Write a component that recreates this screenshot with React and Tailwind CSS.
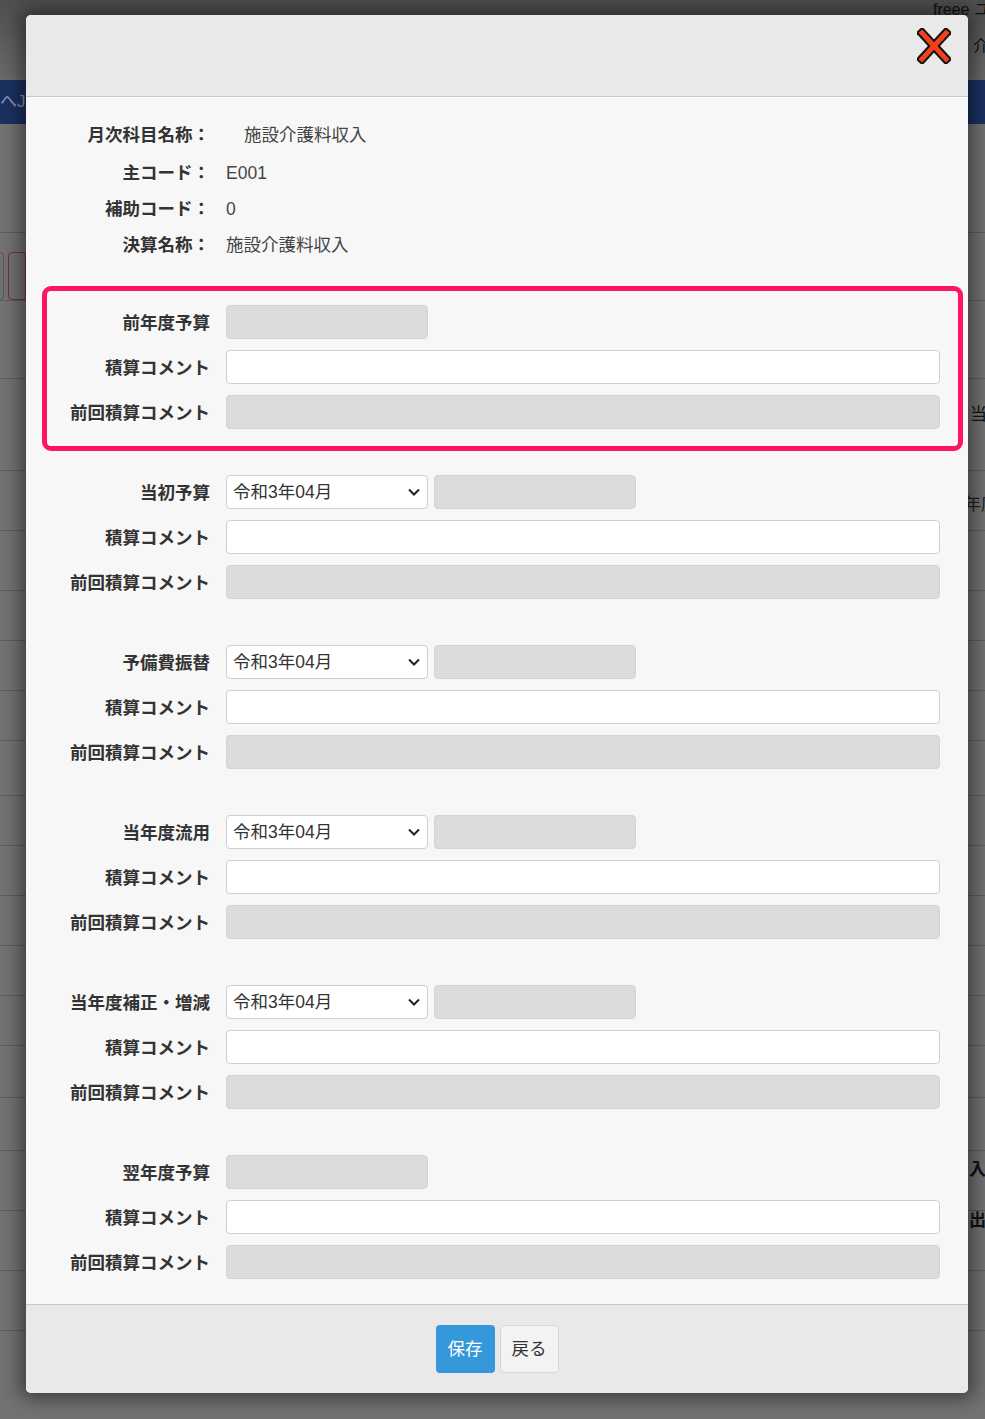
import React from 'react';

const font = { fontFamily: '"Liberation Sans", "Noto Sans CJK JP", sans-serif' };

function CloseIcon() {
  return (
    <svg width="34" height="36" viewBox="0 0 34 36">
      <g strokeLinecap="square">
        <line x1="5" y1="5" x2="29" y2="31" stroke="#111" strokeWidth="9" />
        <line x1="29" y1="5" x2="5" y2="31" stroke="#111" strokeWidth="9" />
        <line x1="5" y1="5" x2="29" y2="31" stroke="#f2401c" strokeWidth="5" />
        <line x1="29" y1="5" x2="5" y2="31" stroke="#f2401c" strokeWidth="5" />
      </g>
    </svg>
  );
}

function Label({ children }) {
  return (
    <div className="w-[184px] shrink-0 pt-[4px] text-right text-[17.5px] font-bold text-[#333] leading-none whitespace-nowrap">
      {children}
    </div>
  );
}

function TextBox() {
  return <div className="h-[34px] flex-1 rounded-[4px] border border-[#cfcfcf] bg-white"></div>;
}

function Disabled({ wide }) {
  return (
    <div
      className={
        wide
          ? 'h-[34px] flex-1 rounded-[4px] border border-[#d2d2d2] bg-[#dcdcdc]'
          : 'h-[34px] w-[202px] rounded-[4px] border border-[#d2d2d2] bg-[#dcdcdc]'
      }
    ></div>
  );
}

function MonthSelect() {
  return (
    <div className="flex h-[34px] w-[202px] items-center justify-between rounded-[4px] border border-[#cfcfcf] bg-white pl-[6px] pr-[6px]">
      <span className="pt-[2px] text-[17.5px] text-[#333] leading-none">令和3年04月</span>
      <svg width="14" height="10" viewBox="0 0 14 10">
        <path d="M2 2.5 L7 7.5 L12 2.5" fill="none" stroke="#222" strokeWidth="2" />
      </svg>
    </div>
  );
}

function Row({ label, children }) {
  return (
    <div className="flex items-center gap-[16px]">
      <Label>{label}</Label>
      <div className="flex flex-1 items-center gap-[6px]">{children}</div>
    </div>
  );
}

function Group({ label, select, highlight }) {
  return (
    <div className="relative flex flex-col gap-[11px] pr-[28px]">
      {highlight && (
        <div className="pointer-events-none absolute left-[16px] right-[5px] top-[-19px] bottom-[-22px] rounded-[9px] border-[5px] border-[#ff1461]"></div>
      )}
      <Row label={label}>
        {select ? (
          <>
            <MonthSelect />
            <Disabled />
          </>
        ) : (
          <Disabled />
        )}
      </Row>
      <Row label="積算コメント">
        <TextBox />
      </Row>
      <Row label="前回積算コメント">
        <Disabled wide />
      </Row>
    </div>
  );
}

function InfoRow({ label, value, indent }) {
  return (
    <div className="flex h-[36px] items-center gap-[16px]">
      <Label>{label}</Label>
      <span className={indent ? 'ml-[18px] pt-[2px] text-[17.5px] text-[#444]' : 'pt-[2px] text-[17.5px] text-[#444]'}>{value}</span>
    </div>
  );
}

const bgRows = [232, 300, 378, 470, 530, 590, 640, 690, 740, 795, 845, 895, 945, 995, 1045, 1097, 1150, 1210, 1270, 1330];

export default function App() {
  return (
    <div style={font} className="relative h-[1419px] w-[985px] overflow-hidden bg-[#727272]">
      {/* dimmed page behind the dialog */}
      <div className="flex flex-col">
        <div className="flex h-[80px] justify-end bg-gradient-to-b from-[#4e4e4e] to-[#6a6a6a]">
          <div className="flex w-[52px] flex-col items-start">
            <span className="whitespace-nowrap text-[16px] leading-[20px] text-[#111]">freee ユ</span>
            <span className="ml-[40px] mt-[16px] whitespace-nowrap text-[16px] leading-[20px] text-[#111]">介</span>
          </div>
        </div>
        <div className="flex h-[44px] items-center bg-[#1b3160] text-[17px] text-[#8796b0]">
          <span>へJ</span>
        </div>
        <div className="flex flex-col pt-[128px]">
          <div className="flex h-[48px] w-[26px] gap-[4px]">
            <div className="h-[48px] w-[4px] rounded-r-[4px] border border-l-0 border-[#5c5c5c]"></div>
            <div className="h-[48px] w-[18px] rounded-l-[4px] border border-[#7a3030]"></div>
          </div>
        </div>
      </div>
      {bgRows.map((y) => (
        <div key={y} className="absolute left-0 right-0 h-px bg-[#5d5d5d]" style={{ top: y }}></div>
      ))}
      <span className="absolute left-[970px] top-[402px] whitespace-nowrap text-[17px] text-[#111]">当</span>
      <span className="absolute left-[964px] top-[492px] whitespace-nowrap text-[17px] text-[#222]">年度</span>
      <span className="absolute left-[969px] top-[1157px] whitespace-nowrap text-[17px] font-bold text-[#111]">入</span>
      <span className="absolute left-[969px] top-[1208px] whitespace-nowrap text-[17px] font-bold text-[#111]">出</span>

      {/* dialog */}
      <div className="absolute left-[26px] top-[15px] w-[942px] overflow-hidden rounded-[5px] bg-[#f7f7f7] shadow-[0_0_18px_6px_rgba(0,0,0,0.45)]">
        <div className="flex h-[82px] items-start justify-end border-b border-[#c8c8c8] bg-[#e9e9e9] pr-[17px] pt-[13px]">
          <CloseIcon />
        </div>

        <div className="flex flex-col pt-[19px] pb-[25px]">
          <InfoRow label="月次科目名称：" value="施設介護料収入" indent />
          <div className="h-[2px]"></div>
          <InfoRow label="主コード：" value="E001" />
          <InfoRow label="補助コード：" value="0" />
          <InfoRow label="決算名称：" value="施設介護料収入" />

          <div className="mt-[43px] flex flex-col gap-[46px]">
            <Group label="前年度予算" highlight />
            <Group label="当初予算" select />
            <Group label="予備費振替" select />
            <Group label="当年度流用" select />
            <Group label="当年度補正・増減" select />
            <Group label="翌年度予算" />
          </div>
        </div>

        <div className="flex h-[89px] items-center justify-center gap-[5px] border-t border-[#c8c8c8] bg-[#e9e9e9]">
          <button className="h-[48px] w-[59px] rounded-[4px] bg-[#3498db] text-[17.5px] text-white">保存</button>
          <button className="h-[48px] w-[59px] rounded-[4px] border border-[#d8d8d8] bg-[#f3f3f3] text-[17.5px] text-[#333]">戻る</button>
        </div>
      </div>
    </div>
  );
}
